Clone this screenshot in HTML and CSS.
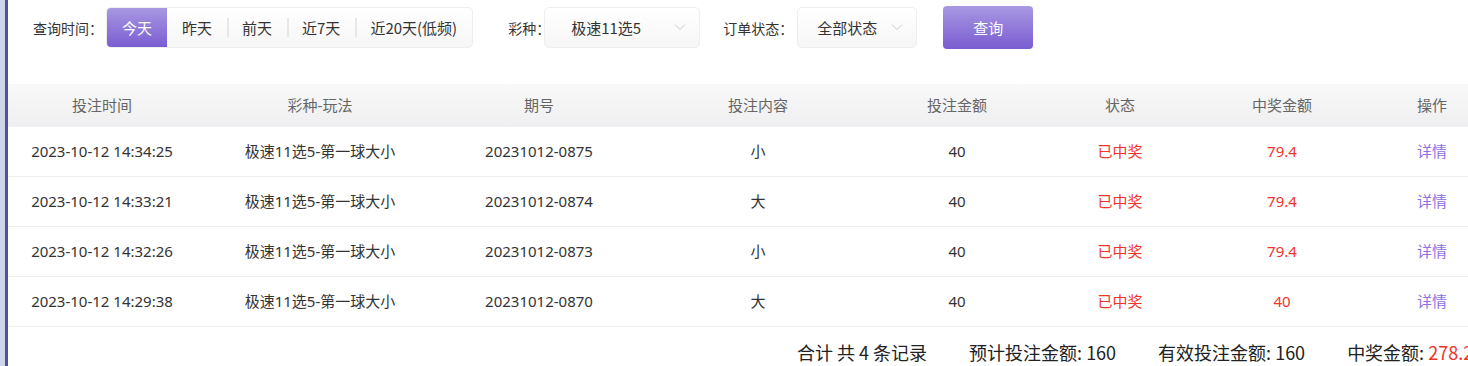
FILE: index.html
```html
<!DOCTYPE html>
<html lang="zh-CN">
<head>
    <meta charset="UTF-8">
    <meta name="viewport" content="width=device-width, initial-scale=1.0">
    <title>投注记录</title>
    <link rel="stylesheet" href="styles.css">
</head>
<body>
    <div class="page">
        <div class="side-edge"></div>

        <div class="main">
            <!-- Filters -->
            <div class="filters">
                <span class="label label-time">查询时间：</span>
                <div class="seg">
                    <span class="seg-item active">今天</span>
                    <span class="seg-item">昨天</span>
                    <span class="seg-item">前天</span>
                    <span class="seg-item">近7天</span>
                    <span class="seg-item">近20天(低频)</span>
                </div>

                <span class="label label-game">彩种：</span>
                <div class="select select-game">
                    <span>极速11选5</span>
                    <svg class="chev" width="12" height="8" viewBox="0 0 12 8"><path d="M1 1.5 L6 6.5 L11 1.5" fill="none" stroke="#ccc" stroke-width="1"/></svg>
                </div>

                <span class="label label-status">订单状态：</span>
                <div class="select select-status">
                    <span>全部状态</span>
                    <svg class="chev" width="12" height="8" viewBox="0 0 12 8"><path d="M1 1.5 L6 6.5 L11 1.5" fill="none" stroke="#ccc" stroke-width="1"/></svg>
                </div>

                <button class="btn-query">查询</button>
            </div>

            <!-- Records -->
            <table class="records">
                <colgroup>
                    <col style="width: 188px">
                    <col style="width: 248px">
                    <col style="width: 190px">
                    <col style="width: 248px">
                    <col style="width: 150px">
                    <col style="width: 176px">
                    <col style="width: 148px">
                    <col style="width: 152px">
                </colgroup>
                <thead>
                    <tr>
                        <th>投注时间</th>
                        <th>彩种-玩法</th>
                        <th>期号</th>
                        <th>投注内容</th>
                        <th>投注金额</th>
                        <th>状态</th>
                        <th>中奖金额</th>
                        <th>操作</th>
                    </tr>
                </thead>
                <tbody>
                    <tr>
                        <td>2023-10-12 14:34:25</td>
                        <td>极速11选5-第一球大小</td>
                        <td>20231012-0875</td>
                        <td>小</td>
                        <td>40</td>
                        <td class="red">已中奖</td>
                        <td class="red">79.4</td>
                        <td><a href="#" class="link">详情</a></td>
                    </tr>
                    <tr>
                        <td>2023-10-12 14:33:21</td>
                        <td>极速11选5-第一球大小</td>
                        <td>20231012-0874</td>
                        <td>大</td>
                        <td>40</td>
                        <td class="red">已中奖</td>
                        <td class="red">79.4</td>
                        <td><a href="#" class="link">详情</a></td>
                    </tr>
                    <tr>
                        <td>2023-10-12 14:32:26</td>
                        <td>极速11选5-第一球大小</td>
                        <td>20231012-0873</td>
                        <td>小</td>
                        <td>40</td>
                        <td class="red">已中奖</td>
                        <td class="red">79.4</td>
                        <td><a href="#" class="link">详情</a></td>
                    </tr>
                    <tr>
                        <td>2023-10-12 14:29:38</td>
                        <td>极速11选5-第一球大小</td>
                        <td>20231012-0870</td>
                        <td>大</td>
                        <td>40</td>
                        <td class="red">已中奖</td>
                        <td class="red">40</td>
                        <td><a href="#" class="link">详情</a></td>
                    </tr>
                </tbody>
            </table>

            <!-- Summary -->
            <div class="summary">
                <span>合计 共 4 条记录</span>
                <span>预计投注金额: 160</span>
                <span>有效投注金额: 160</span>
                <span>中奖金额: <em class="red">278.2</em></span>
            </div>
        </div>
    </div>
</body>
</html>
```

FILE: styles.css
```css
* {
    margin: 0;
    padding: 0;
    box-sizing: border-box;
}
body {
    font-family: "Noto Sans CJK SC", "Noto Sans", sans-serif;
    background-color: #fff;
    color: #333;
    overflow: hidden;
    width: 1468px;
    height: 366px;
}
.page {
    display: flex;
    height: 366px;
}
.side-edge {
    flex: 0 0 8px;
    background-color: #cdd5e6;
    border-right: 3px solid #4e529d;
}
.main {
    flex: 1;
    min-width: 0;
    overflow: hidden;
}

/* filters */
.filters {
    display: flex;
    align-items: center;
    height: 41px;
    margin-top: 7px;
    padding-left: 25px;
    font-size: 14px;
}
.label {
    color: #333;
    margin-right: -6px;
    white-space: nowrap;
}
.label-time {
    margin-right: 3px;
}
.seg {
    display: flex;
    height: 41px;
    border: 1px solid #eee;
    border-radius: 5px;
    background: linear-gradient(#fff, #f6f6f6);
    overflow: hidden;
}
.seg-item {
    position: relative;
    display: flex;
    align-items: center;
    padding: 0 15px;
    font-size: 15px;
    color: #333;
    white-space: nowrap;
}
.seg-item + .seg-item::before {
    content: "";
    position: absolute;
    left: 0;
    top: 10px;
    bottom: 10px;
    width: 2px;
    background-color: #e8e8e8;
}
.seg-item:nth-child(2)::before {
    display: none;
}
.seg-item.active {
    color: #fff;
    background: linear-gradient(#a898e2, #7a5cd1);
}
.label-game {
    margin-left: 35px;
}
.label-status {
    margin-left: 23px;
    margin-right: 4px;
}
.select {
    display: flex;
    align-items: center;
    justify-content: space-between;
    height: 41px;
    border: 1px solid #eee;
    border-radius: 5px;
    background: linear-gradient(#fff, #f6f6f6);
    font-size: 15px;
    color: #333;
}
.select-game {
    width: 156px;
    padding: 0 13px 0 26px;
}
.select-status {
    width: 120px;
    padding: 0 13px 0 19px;
}
.chev {
    margin-top: -2px;
}
.btn-query {
    width: 90px;
    height: 43px;
    margin-left: 26px;
    border: none;
    border-radius: 4px;
    background: linear-gradient(#a898e2, #7a5cd1);
    color: #fff;
    font-family: inherit;
    font-size: 15px;
    cursor: pointer;
}

/* table */
.records {
    width: 1500px;
    margin-top: 36px;
    border-collapse: separate;
    border-spacing: 0;
    table-layout: fixed;
    font-family: "Noto Sans", "Noto Sans CJK SC", sans-serif;
    font-size: 15px;
}
.records th {
    height: 43px;
    padding-bottom: 2px;
    font-weight: normal;
    color: #666;
    background: linear-gradient(#f9f9f9, #efeff1);
    text-align: center;
}
.records td {
    height: 50px;
    padding-bottom: 2px;
    text-align: center;
    color: #333;
    border-bottom: 1px solid #eee;
    white-space: nowrap;
}
.records td.red,
.red {
    color: #f0342a;
}
.link {
    color: #8d70e3;
    text-decoration: none;
}

/* summary */
.summary {
    display: flex;
    align-items: center;
    gap: 42px;
    height: 50px;
    padding-left: 789px;
    font-size: 18px;
    color: #222;
    white-space: nowrap;
}
.summary em {
    font-style: normal;
}
```
